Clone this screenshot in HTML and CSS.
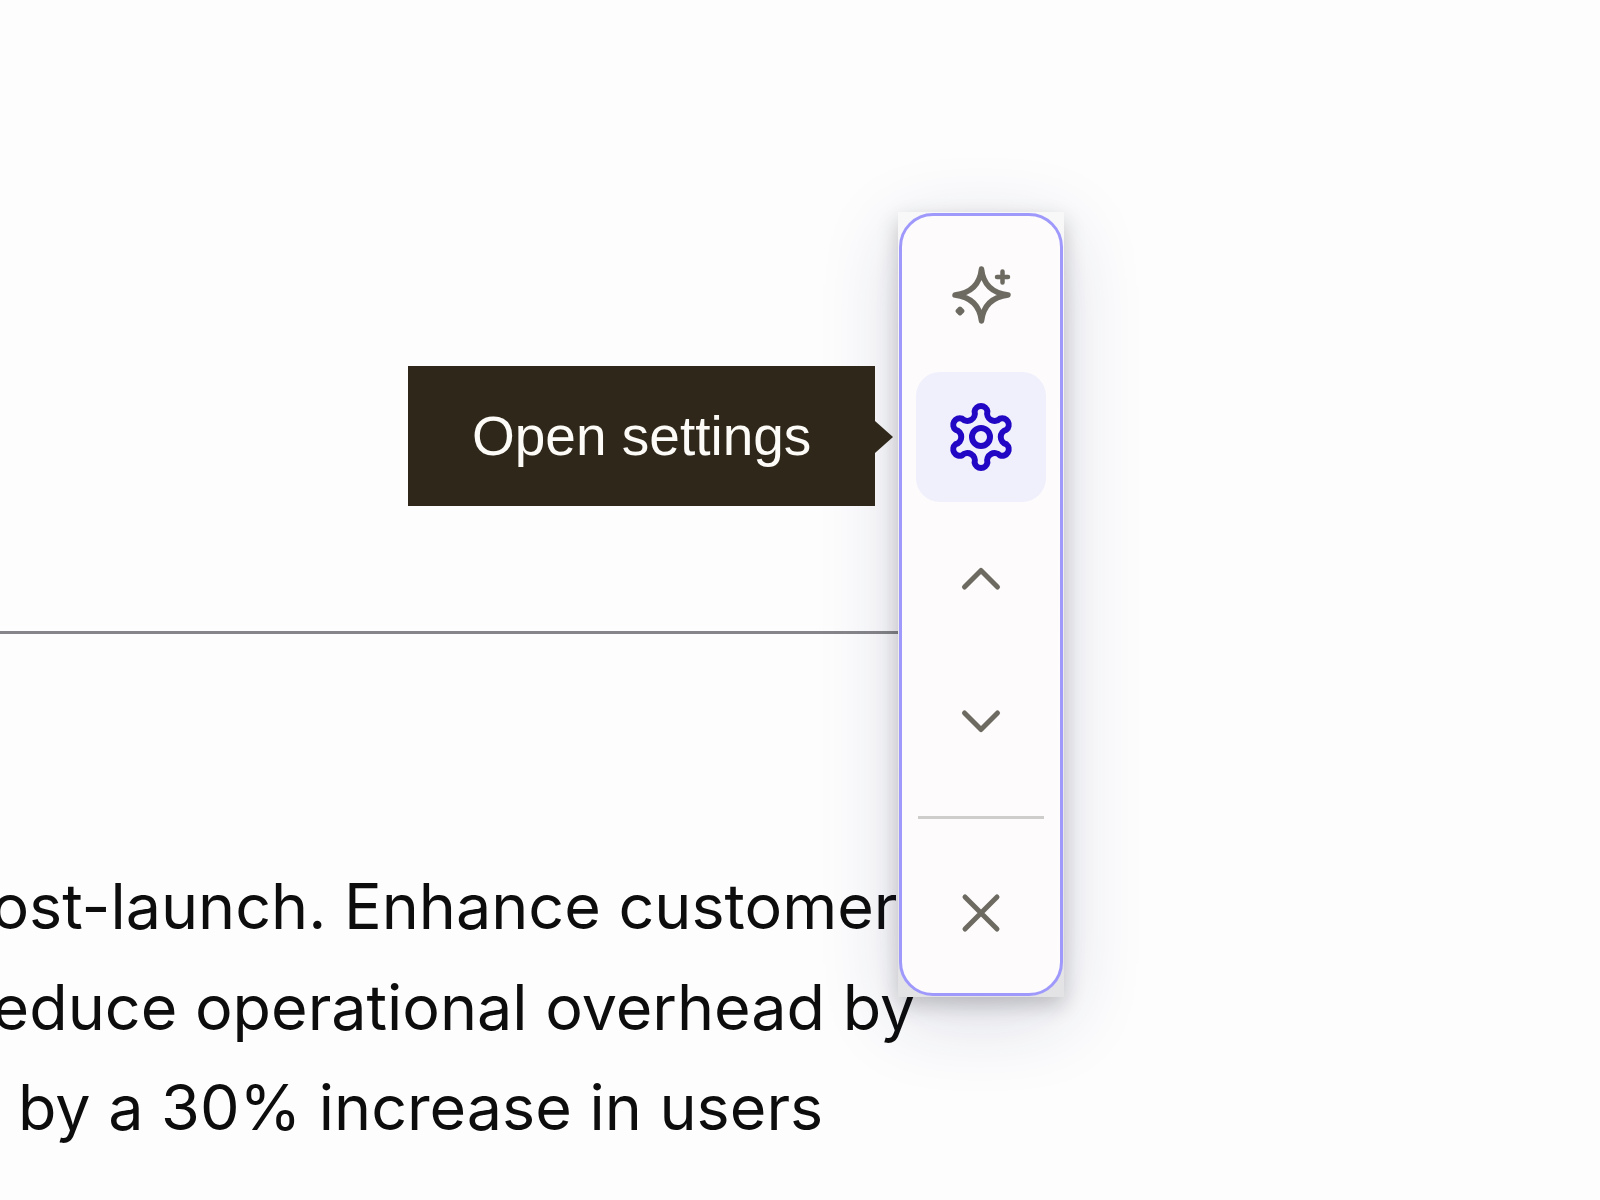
FILE: index.html
```html
<!DOCTYPE html>
<html>
    <head>
        <title>Document editor</title>
        <link rel="stylesheet" href="styles.css">
    </head>
    <body>
        <div class="page">
            <div class="top-area"></div>
            <hr class="rule">
            <div class="copy">
                <p class="line line-first">post-launch. Enhance customer</p>
                <p class="line line-second">reduce operational overhead by</p>
                <p class="line line-third">by a 30% increase in users</p>
            </div>
        </div>

        <div class="toolbar">
            <div class="toolbar-inner">
                <button class="tool-btn" type="button" aria-label="Assistant">
                    <svg class="icon" viewBox="0 0 80 80" fill="none" stroke="currentColor" stroke-width="5.500" stroke-linejoin="round" stroke-linecap="round">
                        <path d="M40.500 14Q43 37 67 40Q43 43 40.500 66Q38 43 14 40Q38 37 40.500 14Z"/>
                        <path d="M61.500 16.500V27.500M56 22H67" stroke-width="4.500"/>
                        <path d="M19 53.500L21.500 56L19 58.500L16.500 56Z" fill="currentColor" stroke-width="4"/>
                    </svg>
                </button>
                <button class="tool-btn tool-btn-active" type="button" aria-label="Open settings">
                    <svg class="icon" viewBox="0 0 80 80" fill="none" stroke="currentColor" stroke-width="6" stroke-linejoin="round">
                        <path d="M33.600 14.370A6.500 6.500 0 0 1 46.400 14.370A7.500 7.500 0 0 0 59 21.640A6.500 6.500 0 0 1 65.400 32.730A7.500 7.500 0 0 0 65.400 47.270A6.500 6.500 0 0 1 59 58.360A7.500 7.500 0 0 0 46.400 65.630A6.500 6.500 0 0 1 33.600 65.630A7.500 7.500 0 0 0 21 58.360A6.500 6.500 0 0 1 14.600 47.270A7.500 7.500 0 0 0 14.600 32.730A6.500 6.500 0 0 1 21 21.640A7.500 7.500 0 0 0 33.600 14.370Z"/>
                        <circle cx="40" cy="40" r="9"/>
                    </svg>
                </button>
                <button class="tool-btn" type="button" aria-label="Previous">
                    <svg class="icon" viewBox="0 0 80 80" fill="none" stroke="currentColor" stroke-width="5" stroke-linecap="round" stroke-linejoin="round">
                        <path d="M23.500 48L40 31.500L56.500 48"/>
                    </svg>
                </button>
                <button class="tool-btn" type="button" aria-label="Next">
                    <svg class="icon" viewBox="0 0 80 80" fill="none" stroke="currentColor" stroke-width="5" stroke-linecap="round" stroke-linejoin="round">
                        <path d="M23.500 32L40 48.500L56.500 32"/>
                    </svg>
                </button>
                <div class="toolbar-sep"></div>
                <button class="tool-btn tool-btn-close" type="button" aria-label="Close">
                    <svg class="icon" viewBox="0 0 80 80" fill="none" stroke="currentColor" stroke-width="5" stroke-linecap="round">
                        <path d="M24 24L56 56M56 24L24 56"/>
                    </svg>
                </button>
            </div>
        </div>

        <div class="tooltip">Open settings</div>
    </body>
</html>
```

FILE: styles.css
```css
* {box-sizing: border-box}

html, body {
  margin: 0;
  height: 100%;
  overflow: hidden;
}

body {
  background-color: #fdfdfe;
  font-family: Inter, "Liberation Sans", sans-serif;
  color: #0d0d0d;
}

.page {
  width: 899px;
}

.top-area {
  height: 631px;
}

.rule {
  border: none;
  height: 3px;
  margin: 0;
  background-color: #86868a;
}

.copy {
  padding-top: 222px;
}

.line {
  margin: 0;
  height: 100.5px;
  line-height: 100.5px;
  font-size: 62.800px;
  white-space: nowrap;
}

.line-first {
  margin-left: -47px;
}

.line-second {
  margin-left: -30px;
}

.line-third {
  margin-left: 18px;
}

/* floating toolbar */
.toolbar {
  position: absolute;
  left: 898px;
  top: 212px;
  width: 166px;
  height: 785px;
  padding: 1px;
  background: linear-gradient(to bottom, #f8f8f9, #e3e3e5);
  box-shadow: 0 8px 20px rgba(0, 0, 0, 0.2), 0 20px 80px rgba(30, 40, 90, 0.16);
}

.toolbar-inner {
  height: 783px;
  padding: 14px 0 0 0;
  display: flex;
  flex-direction: column;
  align-items: center;
  background-color: #fdfbfb;
  border: 3px solid #9f99fc;
  border-radius: 34px;
}

.tool-btn {
  flex: none;
  width: 130px;
  height: 130px;
  margin-bottom: 12px;
  padding: 0;
  border: none;
  border-radius: 24px;
  background: transparent;
  color: #6d6a62;
  display: flex;
  align-items: center;
  justify-content: center;
}

.tool-btn-active {
  background-color: #f0f0fc;
  color: #2208c4;
}

.tool-btn-close {
  margin-bottom: 0;
}

.icon {
  width: 80px;
  height: 80px;
}

.toolbar-sep {
  flex: none;
  width: 126px;
  height: 3px;
  margin: 18px 0 29px 0;
  background-color: #cfcdcb;
}

/* tooltip on the settings button */
.tooltip {
  position: absolute;
  left: 408px;
  top: 366px;
  width: 467px;
  height: 140px;
  padding-left: 64px;
  background-color: #2f271a;
  color: #fdfbf7;
  font-family: "Liberation Sans", Arial, sans-serif;
  font-size: 55px;
  line-height: 140px;
}

.tooltip::after {
  content: "";
  position: absolute;
  left: 100%;
  top: 50%;
  margin-top: -15px;
  border-left: 18px solid #2f271a;
  border-top: 16px solid transparent;
  border-bottom: 16px solid transparent;
}
```
